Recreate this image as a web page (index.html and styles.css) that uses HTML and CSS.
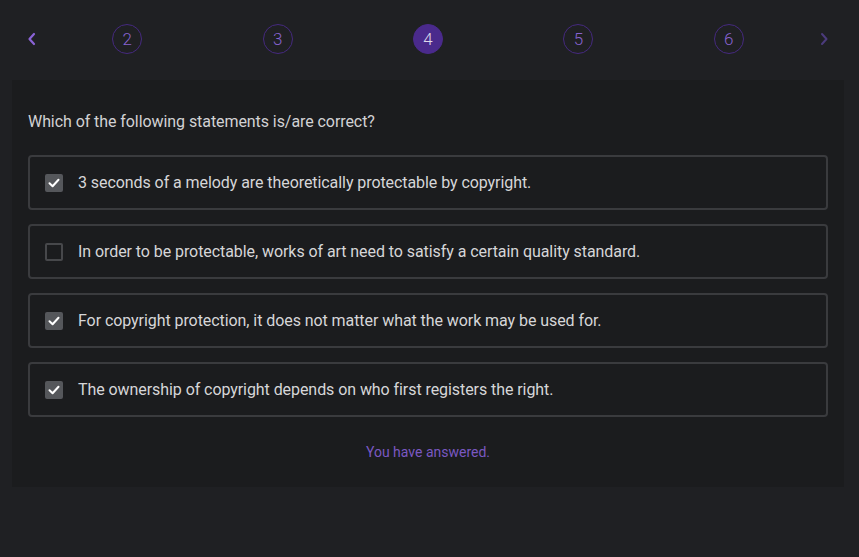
FILE: index.html
```html
<!DOCTYPE html>
<html lang="en">
<head>
<meta charset="utf-8">
<title>Quiz</title>
<link rel="stylesheet" href="styles.css">
</head>
<body>
<div class="page">
  <nav class="steps">
    <button class="arrow"><svg width="10" height="14" viewBox="0 0 10 14"><path d="M7 2 L2.5 7 L7 12" fill="none" stroke="currentColor" stroke-width="2.2" stroke-linecap="round" stroke-linejoin="round"/></svg></button>
    <div class="circles">
      <div class="cell"><span class="step">2</span></div>
      <div class="cell"><span class="step">3</span></div>
      <div class="cell"><span class="step active">4</span></div>
      <div class="cell"><span class="step">5</span></div>
      <div class="cell"><span class="step">6</span></div>
    </div>
    <button class="arrow disabled"><svg width="10" height="14" viewBox="0 0 10 14"><path d="M3 2 L7.5 7 L3 12" fill="none" stroke="currentColor" stroke-width="2" stroke-linecap="round" stroke-linejoin="round"/></svg></button>
  </nav>
  <section class="card">
    <p class="question">Which of the following statements is/are correct?</p>
    <ul class="options">
      <li class="option"><span class="box checked"><svg width="14" height="14" viewBox="0 0 14 14"><path d="M2.5 7.3 L5.6 10.2 L11.5 3.8" fill="none" stroke="#fff" stroke-width="2" stroke-linecap="round" stroke-linejoin="round"/></svg></span><span class="label">3 seconds of a melody are theoretically protectable by copyright.</span></li>
      <li class="option"><span class="box"></span><span class="label">In order to be protectable, works of art need to satisfy a certain quality standard.</span></li>
      <li class="option"><span class="box checked"><svg width="14" height="14" viewBox="0 0 14 14"><path d="M2.5 7.3 L5.6 10.2 L11.5 3.8" fill="none" stroke="#fff" stroke-width="2" stroke-linecap="round" stroke-linejoin="round"/></svg></span><span class="label">For copyright protection, it does not matter what the work may be used for.</span></li>
      <li class="option"><span class="box checked"><svg width="14" height="14" viewBox="0 0 14 14"><path d="M2.5 7.3 L5.6 10.2 L11.5 3.8" fill="none" stroke="#fff" stroke-width="2" stroke-linecap="round" stroke-linejoin="round"/></svg></span><span class="label">The ownership of copyright depends on who first registers the right.</span></li>
    </ul>
    <p class="status">You have answered.</p>
  </section>
</div>
</body>
</html>
```
FILE: styles.css
```css
* { box-sizing: border-box; }
html, body { margin: 0; padding: 0; }
body {
  background: #1f2023;
  font-family: Roboto, "Noto Sans", sans-serif;
  color: #d4d4d6;
}
.page {
  padding: 0 15px 0 12px;
}
.steps {
  display: flex;
  align-items: center;
  height: 80px;
  padding-bottom: 2px;
}
.arrow {
  width: 40px;
  height: 30px;
  background: none;
  border: none;
  padding: 0;
  display: flex;
  align-items: center;
  justify-content: center;
  color: #8a63d6;
}
.arrow.disabled { color: #4b3b7c; }
.circles {
  flex: 1;
  display: flex;
}
.cell {
  flex: 1;
  display: flex;
  justify-content: center;
}
.step {
  width: 30px;
  height: 30px;
  border-radius: 50%;
  border: 1.2px solid #45297f;
  color: #8763d0;
  font-size: 17px;
  font-weight: 300;
  display: flex;
  align-items: center;
  justify-content: center;
}
.step.active {
  background: #4a2a8c;
  border-color: #4a2a8c;
  color: #ddd8ea;
}
.card {
  background: #1b1c1e;
  padding: 30px 16px 25px;
}
.question {
  margin: 0 0 21px;
  font-size: 16px;
  line-height: 24px;
  letter-spacing: -0.07px;
  color: #d2d2d4;
}
.options {
  list-style: none;
  margin: 0;
  padding: 0;
  display: flex;
  flex-direction: column;
  gap: 14px;
}
.option {
  display: flex;
  align-items: center;
  gap: 15px;
  height: 55px;
  padding: 0 15px;
  border: 2px solid #3a3b3e;
  border-radius: 4px;
}
.box {
  width: 18px;
  height: 18px;
  flex: none;
  border: 2px solid #47484b;
  border-radius: 2px;
  display: flex;
  align-items: center;
  justify-content: center;
}
.box.checked {
  background: #55575b;
  border-color: #55575b;
}
.label {
  font-size: 16px;
  line-height: 24px;
  letter-spacing: -0.07px;
  color: #d6d6d8;
}
.status {
  margin: 25px 0 0;
  text-align: center;
  font-size: 14px;
  line-height: 20px;
  color: #7a58c2;
}
```
